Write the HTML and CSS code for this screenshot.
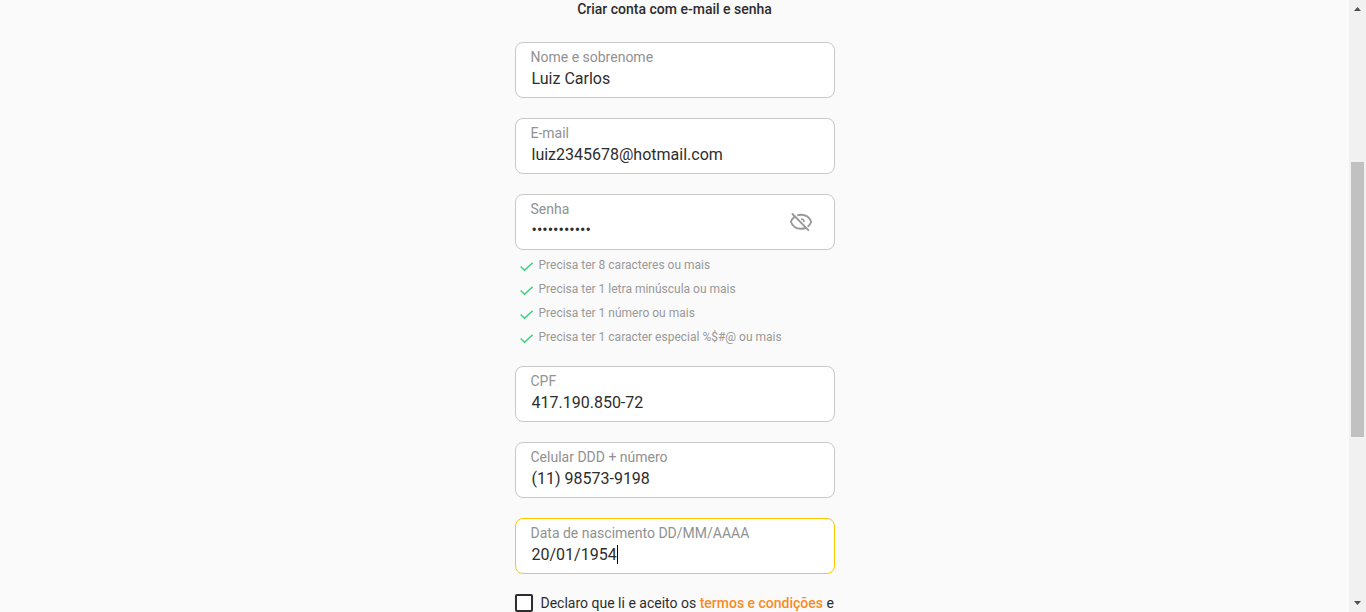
FILE: index.html
```html
<!DOCTYPE html>
<html lang="pt-BR">
<head>
<meta charset="utf-8">
<title>Criar conta</title>
<link rel="stylesheet" href="styles.css">
</head>
<body>
<div class="page">
  <main class="content">
    <form class="form">
      <h1 class="title">Criar conta com e-mail e senha</h1>
      <div class="field"><span class="label">Nome e sobrenome</span><span class="value">Luiz Carlos</span></div>
      <div class="field"><span class="label">E-mail</span><span class="value">luiz2345678@hotmail.com</span></div>
      <div class="field field-password">
        <div class="field-text"><span class="label">Senha</span><span class="value value-dots">•••••••••••</span></div>
        <svg class="eye" viewBox="0 0 24 24"><path d="M8.200 5.400C9.400 5 10.700 4.800 12 4.800C17.200 4.800 20.800 7.900 22.200 11.800C21.600 13.800 20.400 15.500 18.700 16.800M5.300 6.900C3.700 8.200 2.500 9.900 1.900 11.800C3.300 15.800 7.200 18.800 12 18.800C13.500 18.800 14.900 18.500 16.200 18M3 3.500L19.900 20.700"/><path class="pupil" d="M12 9A3 3 0 0 1 15 12"/></svg>
      </div>
      <ul class="rules">
        <li class="rule"><svg class="check" viewBox="0 0 14 10"><path d="M.6 4.500L4.500 8.200L12.700 .8"/></svg>Precisa ter 8 caracteres ou mais</li>
        <li class="rule"><svg class="check" viewBox="0 0 14 10"><path d="M.6 4.500L4.500 8.200L12.700 .8"/></svg>Precisa ter 1 letra minúscula ou mais</li>
        <li class="rule"><svg class="check" viewBox="0 0 14 10"><path d="M.6 4.500L4.500 8.200L12.700 .8"/></svg>Precisa ter 1 número ou mais</li>
        <li class="rule"><svg class="check" viewBox="0 0 14 10"><path d="M.6 4.500L4.500 8.200L12.700 .8"/></svg>Precisa ter 1 caracter especial %$#@ ou mais</li>
      </ul>
      <div class="field"><span class="label">CPF</span><span class="value">417.190.850-72</span></div>
      <div class="field"><span class="label">Celular DDD + número</span><span class="value">(11) 98573-9198</span></div>
      <div class="field field-focus"><span class="label">Data de nascimento DD/MM/AAAA</span><span class="value">20/01/1954<i class="caret"></i></span></div>
      <div class="terms"><span class="box"></span><span>Declaro que li e aceito os <b class="link">termos e condições</b> e</span></div>
    </form>
  </main>
  <div class="scrollbar">
    <svg class="arrow" viewBox="0 0 17 17"><path d="M5 11L8.5 7L12 11z"/></svg>
    <div class="track"><div class="thumb"></div></div>
    <svg class="arrow" viewBox="0 0 17 17"><path d="M5 6L8.5 10L12 6z"/></svg>
  </div>
</div>
</body>
</html>
```
FILE: styles.css
```css
* { box-sizing: border-box; }
body { margin: 0; background: #fafafa; font-family: Roboto, sans-serif; color: #2d2d2d; overflow: hidden; }
.page { display: flex; height: 612px; overflow: hidden; }
.content { flex: 1; display: flex; justify-content: center; }
.form { width: 320px; }
.title { margin: 0 0 33px; height: 9px; line-height: 18px; font-size: 14px; font-weight: 500; text-align: center; white-space: nowrap; }
.field { display: flex; flex-direction: column; height: 56px; margin-bottom: 20px; padding: 5px 15px 0; background: #fff; border: 1px solid #c8c8c8; border-radius: 8px; }
.field-password { flex-direction: row; justify-content: space-between; padding-right: 21px; margin-bottom: 4px; }
.field-text { display: flex; flex-direction: column; }
.field-focus { border-color: #fcc800; margin-bottom: 19px; }
.label { font-size: 14px; line-height: 18px; color: #919191; }
.value { font-size: 16px; line-height: 26px; padding-left: 1px; white-space: nowrap; }
.value-dots { line-height: 24px; }
.eye { width: 24px; height: 24px; margin-top: 10px; fill: none; stroke: #999; stroke-width: 1.9; }
.pupil { stroke-width: 1.7; }
.rules { list-style: none; margin: 0 0 16px; padding: 0; }
.rule { display: flex; height: 24px; padding-left: 4px; font-size: 12px; line-height: 22px; color: #999; }
.check { width: 14px; height: 10px; margin: 8px 5px 0 1px; fill: none; stroke: #36d17c; stroke-width: 1.5; }
.caret { display: inline-block; width: 1px; height: 19px; background: #000; vertical-align: -4px; }
.terms { display: flex; align-items: center; gap: 8px; height: 20px; font-size: 14px; white-space: nowrap; }
.box { width: 18px; height: 18px; border: 2px solid #2d2d2d; border-radius: 2px; background: #fff; }
.link { color: #f78c1f; font-weight: 500; }
.scrollbar { width: 17px; display: flex; flex-direction: column; background: #f1f1f1; }
.arrow { width: 17px; height: 17px; fill: #505050; }
.track { flex: 1; padding: 145px 2px 0; }
.thumb { height: 275px; background: #c1c1c1; }
```
